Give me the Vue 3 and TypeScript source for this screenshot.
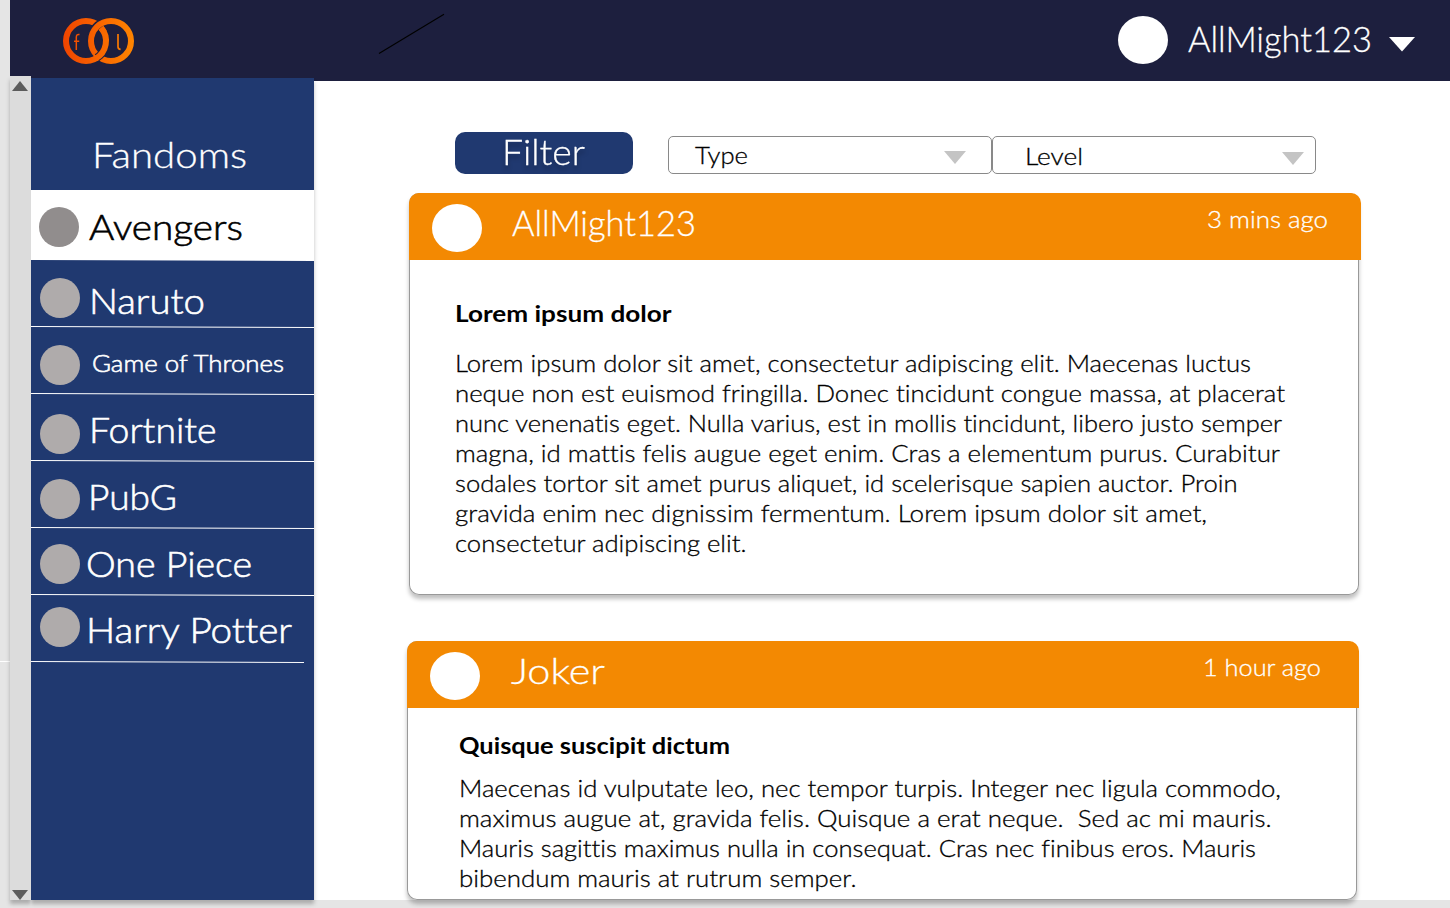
<script setup lang="ts">
import { h } from 'vue'
import type { FunctionalComponent } from 'vue'

interface LabelProps {
  text: string
  width: number
  size: number
}

// One line of text set to a fixed measure; line box is 1.25em with the baseline at 1em.
const Label: FunctionalComponent<LabelProps> = (props) =>
  h('svg', { width: props.width, height: props.size * 1.25, overflow: 'visible' }, [
    h(
      'text',
      {
        x: 0,
        y: props.size,
        'font-size': props.size * 0.98,
        fill: 'currentColor',
        textLength: props.width,
        lengthAdjust: 'spacingAndGlyphs',
        'xml:space': 'preserve',
        style: 'white-space: pre',
      },
      props.text,
    ),
  ])
Label.props = ['text', 'width', 'size']

interface Fandom {
  name: string
  width: number
  size: number
  left: number
  top: number
  avatarTop: number
  active?: boolean
}

const fandoms: Fandom[] = [
  { name: 'Avengers', width: 154, size: 36, left: 9.5, top: 14, avatarTop: 17, active: true },
  { name: 'Naruto', width: 116, size: 36, left: 9, top: 17, avatarTop: 17 },
  { name: 'Game of Thrones', width: 192, size: 24, left: 12, top: 20, avatarTop: 17 },
  { name: 'Fortnite', width: 127.5, size: 36, left: 9, top: 12, avatarTop: 19 },
  { name: 'PubG', width: 89, size: 36, left: 7.5, top: 12, avatarTop: 17 },
  { name: 'One Piece', width: 166, size: 36, left: 6, top: 12, avatarTop: 15 },
  { name: 'Harry Potter', width: 206, size: 36, left: 5.5, top: 11, avatarTop: 11 },
]

interface Line {
  text: string
  width: number
}

interface Post {
  id: string
  author: Line
  time: Line
  title: Line
  lines: Line[]
}

const posts: Post[] = [
  {
    id: 'first',
    author: { text: 'AllMight123', width: 184 },
    time: { text: '3 mins ago', width: 121 },
    title: { text: 'Lorem ipsum dolor', width: 216.5 },
    lines: [
      { text: 'Lorem ipsum dolor sit amet, consectetur adipiscing elit. Maecenas luctus', width: 796 },
      { text: 'neque non est euismod fringilla. Donec tincidunt congue massa, at placerat', width: 830 },
      { text: 'nunc venenatis eget. Nulla varius, est in mollis tincidunt, libero justo semper', width: 827 },
      { text: 'magna, id mattis felis augue eget enim. Cras a elementum purus. Curabitur', width: 825 },
      { text: 'sodales tortor sit amet purus aliquet, id scelerisque sapien auctor. Proin', width: 782.5 },
      { text: 'gravida enim nec dignissim fermentum. Lorem ipsum dolor sit amet,', width: 752 },
      { text: 'consectetur adipiscing elit.', width: 291.5 },
    ],
  },
  {
    id: 'second',
    author: { text: 'Joker', width: 94 },
    time: { text: '1 hour ago', width: 118 },
    title: { text: 'Quisque suscipit dictum', width: 271 },
    lines: [
      { text: 'Maecenas id vulputate leo, nec tempor turpis. Integer nec ligula commodo,', width: 822 },
      { text: 'maximus augue at, gravida felis. Quisque a erat neque.  Sed ac mi mauris.', width: 812.5 },
      { text: 'Mauris sagittis maximus nulla in consequat. Cras nec finibus eros. Mauris', width: 797 },
      { text: 'bibendum mauris at rutrum semper.', width: 397.5 },
    ],
  },
]
</script>

<template>
  <div class="page">
    <div class="gutter"><i class="gutter-tick"></i></div>
    <div class="app">
      <header class="topbar">
        <svg class="logo" width="74" height="50" viewBox="61 16 74 50" fill="none">
          <defs>
            <linearGradient id="ring" gradientUnits="userSpaceOnUse" x1="63" y1="0" x2="134" y2="0">
              <stop offset="0" stop-color="#f04400" />
              <stop offset="1" stop-color="#ff8500" />
            </linearGradient>
          </defs>
          <circle cx="86" cy="41" r="20" stroke="url(#ring)" stroke-width="6" />
          <path d="M93.2 51.2A20.5 20.5 0 0 1 102 22.7" stroke="#1d1f3e" stroke-width="8" />
          <circle cx="111" cy="41" r="20" stroke="url(#ring)" stroke-width="6" />
          <path d="M104 32.3A20 20 0 0 1 97 57.7" stroke="#1d1f3e" stroke-width="8" />
          <path d="M101 27.8A20 20 0 0 1 95.5 58.6" stroke="url(#ring)" stroke-width="6" />
          <path d="M79.5 34.6C77 34.2 76.3 35.4 76.3 37.4V50M74 41.2H79.2" stroke="#f25000" stroke-width="1.5" />
          <path d="M118 34V46.8Q118 49.2 120.6 49.4" stroke="#fb7900" stroke-width="1.7" />
        </svg>
        <svg class="slash" width="70" height="44" viewBox="377 12 70 44">
          <path d="M379 53.5L444 14.3" stroke="#000" stroke-width="1.1" />
        </svg>
        <div class="user">
          <span class="portrait"></span>
          <Label class="user-name" text="AllMight123" :width="184" :size="36" />
          <svg class="user-caret" width="26" height="15" viewBox="0 0 26 15"><path d="M0 0H26L13 14.6Z" fill="#fff" /></svg>
        </div>
      </header>

      <div class="body">
        <nav class="side">
          <div class="scroll">
            <svg width="16" height="10" viewBox="0 0 16 10"><path d="M8 0L16 10H0Z" fill="#5c5c5c" /></svg>
            <svg width="16" height="10" viewBox="0 0 16 10"><path d="M0 0H16L8 10Z" fill="#5c5c5c" /></svg>
          </div>
          <div class="menu">
            <div class="menu-title"><Label text="Fandoms" :width="155" :size="36" /></div>
            <div v-for="f in fandoms" :key="f.name" class="fandom" :class="{ active: f.active }">
              <div class="fandom-main">
                <span class="dot" :style="{ marginTop: f.avatarTop + 'px' }"></span>
                <Label
                  class="name"
                  :text="f.name"
                  :width="f.width"
                  :size="f.size"
                  :style="{ marginTop: f.top + 'px', marginLeft: f.left + 'px' }"
                />
              </div>
              <svg v-if="!f.active" class="rule" width="283" height="2" viewBox="0 0 283 2" preserveAspectRatio="none">
                <path d="M0 .5L283 1.5" stroke="#fff" />
              </svg>
            </div>
          </div>
        </nav>

        <main class="feed">
          <div class="filters">
            <button class="filter"><Label text="Filter" :width="83" :size="36" /></button>
            <div class="select type">
              <Label text="Type" :width="53" :size="24" />
              <svg width="22" height="13" viewBox="0 0 22 13"><path d="M0 0H22L11 13Z" fill="#c4c4c4" /></svg>
            </div>
            <div class="select level">
              <Label text="Level" :width="58" :size="24" />
              <svg width="22" height="13" viewBox="0 0 22 13"><path d="M0 0H22L11 13Z" fill="#c4c4c4" /></svg>
            </div>
          </div>

          <article v-for="p in posts" :key="p.id" class="post" :class="p.id">
            <div class="post-head">
              <span class="portrait"></span>
              <Label class="author" :text="p.author.text" :width="p.author.width" :size="36" />
              <Label class="time" :text="p.time.text" :width="p.time.width" :size="24" />
            </div>
            <div class="post-text">
              <Label class="title" :text="p.title.text" :width="p.title.width" :size="24" />
              <Label v-for="l in p.lines" :key="l.text" :text="l.text" :width="l.width" :size="24" />
            </div>
          </article>
        </main>
      </div>
      <div class="footer"></div>
    </div>
  </div>
</template>

<style>
body {
  background: #e5e5e5;
  overflow: hidden;
}
svg text {
  stroke: currentColor;
  stroke-width: 0.3px;
  font-variant-ligatures: none;
}
.name text {
  stroke-width: 0.6px;
}
.title text {
  stroke-width: 0;
}
</style>

<style scoped>
.page {
  display: flex;
  width: 1450px;
  height: 908px;
  overflow: hidden;
  background: #e5e5e5;
  font-family: Lato, 'Open Sans', sans-serif;
  font-weight: 300;
  color: #000;
}
.page svg {
  display: block;
  flex: none;
}
.gutter {
  width: 10px;
  flex: none;
}
.gutter-tick {
  display: block;
  height: 1px;
  margin-top: 661px;
  background: #fff;
}
.app {
  width: 1440px;
  flex: none;
}
.topbar {
  display: flex;
  align-items: flex-start;
  height: 81px;
  background: #1d1f3e;
  color: #fff;
}
.logo {
  margin: 16px 0 0 51px;
}
.slash {
  margin: 12px 0 0 242px;
}
.user {
  display: flex;
  align-items: flex-start;
  margin: 16px 35px 0 auto;
}
.portrait {
  width: 50px;
  height: 48px;
  flex: none;
  border-radius: 50%;
  background: #fff;
}
.user-name {
  margin-left: 20px;
}
.user-caret {
  margin: 21px 0 0 17px;
}
.body {
  display: flex;
  align-items: flex-start;
  height: 819px;
  background: #fff;
}
.side {
  position: relative;
  display: flex;
  align-items: flex-end;
  width: 304px;
  height: 824px;
  flex: none;
  margin-top: -5px;
}
.scroll {
  display: flex;
  flex-direction: column;
  justify-content: space-between;
  width: 21px;
  height: 824px;
  box-sizing: border-box;
  padding: 5px 0 0 1.5px;
  background: #dcdcdc;
  box-shadow: 0 4px 4px rgba(0, 0, 0, 0.25);
  clip-path: inset(0 0 -10px -10px);
}
.menu {
  width: 283px;
  height: 822px;
  background: #203970;
  color: #fff;
  box-shadow: 0 4px 4px rgba(0, 0, 0, 0.25);
  clip-path: inset(0 -10px -10px 0);
}
.menu-title {
  height: 58px;
  padding: 54px 0 0 60.5px;
}
.fandom {
  display: flex;
  flex-direction: column;
  justify-content: space-between;
  height: 67px;
}
.fandom-main {
  display: flex;
  align-items: flex-start;
  height: 65px;
  padding-left: 9px;
}
.fandom.active {
  height: 71px;
  background: #fff;
  color: #000;
  clip-path: polygon(0 0, 100% 0, 100% 71px, 0 70px);
}
.active .fandom-main {
  padding-left: 8px;
}
.dot {
  width: 40px;
  height: 40px;
  flex: none;
  border-radius: 50%;
  background: #afabab;
}
.active .dot {
  background: #918d8d;
}
.fandom:last-child .rule {
  width: 273px;
}
.feed {
  width: 1136px;
}
.filters {
  display: flex;
  align-items: flex-start;
  height: 61px;
  padding: 51px 0 0 141px;
}
.filter {
  display: flex;
  width: 178px;
  height: 42px;
  padding: 0 0 0 47px;
  border: 0;
  border-radius: 10px;
  background: #203970;
  color: #fff;
  font: inherit;
}
.filter svg {
  margin-top: -3px;
  filter: drop-shadow(0 4px 2px rgba(0, 0, 0, 0.25));
}
.select {
  display: flex;
  justify-content: space-between;
  align-items: flex-start;
  width: 324px;
  height: 38px;
  margin-top: 4px;
  box-sizing: border-box;
  border: 1px solid #898989;
  border-radius: 5px;
}
.type {
  margin-left: 35px;
  padding: 3px 25px 0 26px;
}
.type svg:last-child {
  margin-top: 11px;
}
.level {
  padding: 4px 11px 0 31.5px;
}
.level svg:last-child {
  margin-top: 11px;
}
.post {
  width: 950px;
  box-sizing: border-box;
  border-radius: 10px;
  background: #fff;
  box-shadow: inset 0 0 0 1px #999, 0 4px 4px rgba(0, 0, 0, 0.25);
}
.post.first {
  height: 402px;
  margin-left: 95px;
}
.post.second {
  height: 259px;
  margin: 46px 0 0 93px;
}
.post-head {
  display: flex;
  align-items: flex-start;
  width: 952px;
  height: 67px;
  box-sizing: border-box;
  padding: 0 33px 0 23px;
  border-radius: 10px 10px 0 0;
  background: #f38902;
  color: #fff;
}
.second .post-head {
  padding-right: 38.5px;
}
.post-head .portrait {
  margin-top: 11px;
}
.author {
  margin: 7px auto 0 30px;
}
.second .author {
  margin-left: 31px;
}
.time {
  margin-top: 11px;
}
.post-text {
  padding: 38px 0 0 46px;
}
.second .post-text {
  padding: 22px 0 0 52px;
}
.title {
  margin-bottom: 20px;
  font-weight: 700;
}
.second .title {
  margin-bottom: 13px;
}
.footer {
  height: 8px;
}
</style>
